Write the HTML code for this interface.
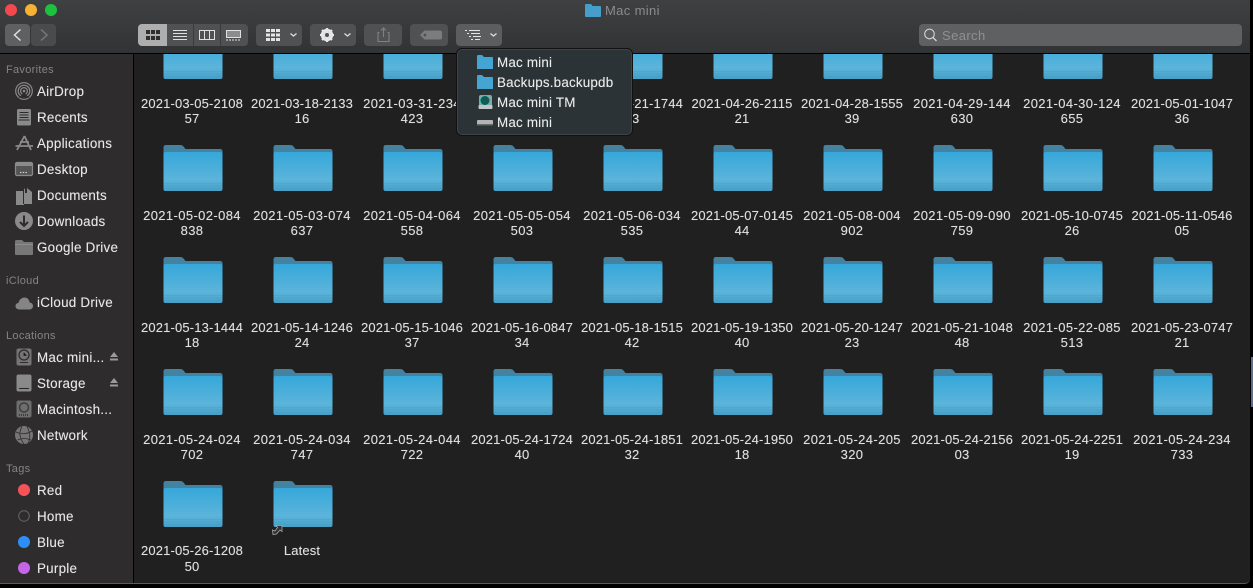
<!DOCTYPE html>
<html><head><meta charset="utf-8"><title>Mac mini</title>
<style>
html,body{margin:0;padding:0;background:#000;width:1253px;height:588px;overflow:hidden}
body{position:relative;font-family:"Liberation Sans",sans-serif}
#win{position:absolute;left:0;top:0;width:1250px;height:584px;background:#212021;overflow:hidden;border-radius:0 0 5px 0;border-bottom:1px solid #5a5a5a;box-sizing:border-box}
.i{position:absolute;width:110px;text-align:center;font-size:13px;line-height:15px;color:#e0e0e0;letter-spacing:.15px;white-space:nowrap;text-shadow:0 0 .6px rgba(255,255,255,.45)}
.w{letter-spacing:.38px}
.f{position:absolute;width:60px;height:48px}
#bar{position:absolute;left:0;top:0;width:1250px;height:54px;background:linear-gradient(#3f4042,#323335);border-bottom:1px solid #000;box-sizing:border-box}
#side{position:absolute;left:0;top:54px;width:134px;height:530px;background:#2e2c2d;border-right:1px solid #000;box-sizing:border-box}
.s{position:absolute;left:37px;font-size:13.4px;line-height:16px;color:#e8e8e8;letter-spacing:.25px;white-space:nowrap;text-shadow:0 0 .6px rgba(255,255,255,.45)}
.h{position:absolute;left:6px;font-size:11px;line-height:14px;color:#858485;letter-spacing:.3px}
.b{position:absolute;top:24px;height:22px;background:#5a5b5d;border-radius:4px}
#pop{position:absolute;left:456px;top:48px;width:177px;height:88px;background:#2b3337;border-radius:6px;border:1px solid #111;box-shadow:inset 0 0 0 1px #3e4448;box-sizing:border-box}
.p{position:absolute;left:497px;font-size:13.4px;line-height:16px;color:#ececec;letter-spacing:.2px;white-space:nowrap;text-shadow:0 0 .6px rgba(255,255,255,.45)}
#strip{position:absolute;left:1251px;top:357px;width:2px;height:50px;background:#5d6f8e}
svg.o{position:absolute;left:0;top:0;pointer-events:none}
</style></head><body>
<svg width="0" height="0" style="position:absolute"><defs>
<linearGradient id="g" x1="0" y1="0" x2="0" y2="1"><stop offset="0" stop-color="#35a7da"/><stop offset=".72" stop-color="#5cb4da"/><stop offset=".8" stop-color="#55aed4"/><stop offset="1" stop-color="#479fc6"/></linearGradient>
<symbol id="fd" viewBox="0 0 60 48"><path d="M.5 8V3.500Q.5 1 3 1H17Q19.500 1 20.500 2.500L22.500 5H57Q59.500 5 59.500 7.500V12H.5Z" fill="#44829f"/><rect x=".5" y="8" width="59" height="39" rx="2" fill="url(#g)"/><path d="M.5 39.500H59.500M.5 42H59.500M.5 44.500H59.500" stroke="#439bc2" stroke-width=".6" opacity=".6"/></symbol>
</defs></svg>
<div id="win">
<svg class="f" style="left:163px;top:32px"><use href="#fd"/></svg><svg class="f" style="left:273px;top:32px"><use href="#fd"/></svg><svg class="f" style="left:383px;top:32px"><use href="#fd"/></svg><svg class="f" style="left:493px;top:32px"><use href="#fd"/></svg><svg class="f" style="left:603px;top:32px"><use href="#fd"/></svg><svg class="f" style="left:713px;top:32px"><use href="#fd"/></svg><svg class="f" style="left:823px;top:32px"><use href="#fd"/></svg><svg class="f" style="left:933px;top:32px"><use href="#fd"/></svg><svg class="f" style="left:1043px;top:32px"><use href="#fd"/></svg><svg class="f" style="left:1153px;top:32px"><use href="#fd"/></svg>
<svg class="f" style="left:163px;top:144px"><use href="#fd"/></svg><svg class="f" style="left:273px;top:144px"><use href="#fd"/></svg><svg class="f" style="left:383px;top:144px"><use href="#fd"/></svg><svg class="f" style="left:493px;top:144px"><use href="#fd"/></svg><svg class="f" style="left:603px;top:144px"><use href="#fd"/></svg><svg class="f" style="left:713px;top:144px"><use href="#fd"/></svg><svg class="f" style="left:823px;top:144px"><use href="#fd"/></svg><svg class="f" style="left:933px;top:144px"><use href="#fd"/></svg><svg class="f" style="left:1043px;top:144px"><use href="#fd"/></svg><svg class="f" style="left:1153px;top:144px"><use href="#fd"/></svg>
<svg class="f" style="left:163px;top:256px"><use href="#fd"/></svg><svg class="f" style="left:273px;top:256px"><use href="#fd"/></svg><svg class="f" style="left:383px;top:256px"><use href="#fd"/></svg><svg class="f" style="left:493px;top:256px"><use href="#fd"/></svg><svg class="f" style="left:603px;top:256px"><use href="#fd"/></svg><svg class="f" style="left:713px;top:256px"><use href="#fd"/></svg><svg class="f" style="left:823px;top:256px"><use href="#fd"/></svg><svg class="f" style="left:933px;top:256px"><use href="#fd"/></svg><svg class="f" style="left:1043px;top:256px"><use href="#fd"/></svg><svg class="f" style="left:1153px;top:256px"><use href="#fd"/></svg>
<svg class="f" style="left:163px;top:368px"><use href="#fd"/></svg><svg class="f" style="left:273px;top:368px"><use href="#fd"/></svg><svg class="f" style="left:383px;top:368px"><use href="#fd"/></svg><svg class="f" style="left:493px;top:368px"><use href="#fd"/></svg><svg class="f" style="left:603px;top:368px"><use href="#fd"/></svg><svg class="f" style="left:713px;top:368px"><use href="#fd"/></svg><svg class="f" style="left:823px;top:368px"><use href="#fd"/></svg><svg class="f" style="left:933px;top:368px"><use href="#fd"/></svg><svg class="f" style="left:1043px;top:368px"><use href="#fd"/></svg><svg class="f" style="left:1153px;top:368px"><use href="#fd"/></svg>
<svg class="f" style="left:163px;top:480px"><use href="#fd"/></svg><svg class="f" style="left:273px;top:480px"><use href="#fd"/></svg>

<div class="i" style="left:137px;top:96px">2021-03-05-2108<br>57</div><div class="i" style="left:247px;top:96px">2021-03-18-2133<br>16</div><div class="i w" style="left:357px;top:96px">2021-03-31-234<br>423</div><div class="i" style="left:467px;top:96px">2021-04-21-1744<br>13</div><div class="i" style="left:577px;top:96px">2021-04-21-1744<br>13</div><div class="i" style="left:687px;top:96px">2021-04-26-2115<br>21</div><div class="i" style="left:797px;top:96px">2021-04-28-1555<br>39</div><div class="i w" style="left:907px;top:96px">2021-04-29-144<br>630</div><div class="i w" style="left:1017px;top:96px">2021-04-30-124<br>655</div><div class="i" style="left:1127px;top:96px">2021-05-01-1047<br>36</div>

<div class="i w" style="left:137px;top:208px">2021-05-02-084<br>838</div><div class="i w" style="left:247px;top:208px">2021-05-03-074<br>637</div><div class="i w" style="left:357px;top:208px">2021-05-04-064<br>558</div><div class="i w" style="left:467px;top:208px">2021-05-05-054<br>503</div><div class="i w" style="left:577px;top:208px">2021-05-06-034<br>535</div><div class="i" style="left:687px;top:208px">2021-05-07-0145<br>44</div><div class="i w" style="left:797px;top:208px">2021-05-08-004<br>902</div><div class="i w" style="left:907px;top:208px">2021-05-09-090<br>759</div><div class="i" style="left:1017px;top:208px">2021-05-10-0745<br>26</div><div class="i" style="left:1127px;top:208px">2021-05-11-0546<br>05</div>

<div class="i" style="left:137px;top:320px">2021-05-13-1444<br>18</div><div class="i" style="left:247px;top:320px">2021-05-14-1246<br>24</div><div class="i" style="left:357px;top:320px">2021-05-15-1046<br>37</div><div class="i" style="left:467px;top:320px">2021-05-16-0847<br>34</div><div class="i" style="left:577px;top:320px">2021-05-18-1515<br>42</div><div class="i" style="left:687px;top:320px">2021-05-19-1350<br>40</div><div class="i" style="left:797px;top:320px">2021-05-20-1247<br>23</div><div class="i" style="left:907px;top:320px">2021-05-21-1048<br>48</div><div class="i w" style="left:1017px;top:320px">2021-05-22-085<br>513</div><div class="i" style="left:1127px;top:320px">2021-05-23-0747<br>21</div>

<div class="i w" style="left:137px;top:432px">2021-05-24-024<br>702</div><div class="i w" style="left:247px;top:432px">2021-05-24-034<br>747</div><div class="i w" style="left:357px;top:432px">2021-05-24-044<br>722</div><div class="i" style="left:467px;top:432px">2021-05-24-1724<br>40</div><div class="i" style="left:577px;top:432px">2021-05-24-1851<br>32</div><div class="i" style="left:687px;top:432px">2021-05-24-1950<br>18</div><div class="i w" style="left:797px;top:432px">2021-05-24-205<br>320</div><div class="i" style="left:907px;top:432px">2021-05-24-2156<br>03</div><div class="i" style="left:1017px;top:432px">2021-05-24-2251<br>19</div><div class="i w" style="left:1127px;top:432px">2021-05-24-234<br>733</div>

<div class="i" style="left:137px;top:543px;line-height:16px">2021-05-26-1208<br>50</div><div class="i" style="left:247px;top:543px;line-height:16px">Latest</div>

<svg class="o" style="left:270px;top:522px" width="14" height="14" viewBox="0 0 14 14"><path d="M3 12.500L2.500 8 5 9 7.500 5.500 6 3.500H12V9.500L10 8 6.500 12Z" fill="#333" stroke="#aaa" stroke-width=".8"/></svg>

<div id="bar"></div>
<div class="b" style="left:5px;width:25px;background:#5f6062"></div>
<div class="b" style="left:31px;width:25px;background:#4a4b4d"></div>
<div class="b" style="left:138px;width:110px;background:#505153"></div>
<div class="b" style="left:138px;width:29px;background:#aeaeae;border-radius:4px 0 0 4px"></div>
<div class="b" style="left:256px;width:46px;background:#505153"></div>
<div class="b" style="left:310px;width:46px;background:#505153"></div>
<div class="b" style="left:364px;width:38px;background:#505153"></div>
<div class="b" style="left:410px;width:38px;background:#505153"></div>
<div class="b" style="left:456px;width:46px;background:#5c5d5f"></div>
<div class="b" style="left:919px;width:323px;background:#5e6062"></div>
<div style="position:absolute;left:942px;top:28px;font-size:13px;line-height:16px;color:#8f9092;letter-spacing:.4px">Search</div>
<div style="position:absolute;left:605px;top:3px;font-size:13px;line-height:16px;color:#8c8c8e;letter-spacing:.35px">Mac mini</div>

<div id="side">
<div class="h" style="top:9px">Favorites</div>
<div class="s" style="top:30px">AirDrop</div><div class="s" style="top:56px">Recents</div><div class="s" style="top:82px">Applications</div><div class="s" style="top:108px">Desktop</div><div class="s" style="top:134px">Documents</div><div class="s" style="top:160px">Downloads</div><div class="s" style="top:186px">Google Drive</div>
<div class="h" style="top:220px">iCloud</div>
<div class="s" style="top:241px">iCloud Drive</div>
<div class="h" style="top:275px">Locations</div>
<div class="s" style="top:296px">Mac mini...</div><div class="s" style="top:322px">Storage</div><div class="s" style="top:348px">Macintosh...</div><div class="s" style="top:374px">Network</div>
<div class="h" style="top:408px">Tags</div>
<div class="s" style="top:429px">Red</div><div class="s" style="top:455px">Home</div><div class="s" style="top:481px">Blue</div><div class="s" style="top:507px">Purple</div>
</div>

<svg class="o" width="1250" height="584" viewBox="0 0 1250 584">
<circle cx="11" cy="10" r="6" fill="#f2484e"/><circle cx="31" cy="10" r="6" fill="#f7b135"/><circle cx="51" cy="10" r="6" fill="#1cc23f"/>
<path d="M20.500 29.500L14.500 35 20.500 40.500" fill="none" stroke="#e0e0e0" stroke-width="1.500"/>
<path d="M41 29.500L47 35 41 40.500" fill="none" stroke="#77787a" stroke-width="1.500"/>
<g fill="#2f2f30"><rect x="146" y="30" width="4" height="4"/><rect x="151" y="30" width="4" height="4"/><rect x="156" y="30" width="4" height="4"/><rect x="146" y="36" width="4" height="4"/><rect x="151" y="36" width="4" height="4"/><rect x="156" y="36" width="4" height="4"/></g>
<path d="M173 30.500H187M173 33.500H187M173 36.500H187M173 39.500H187" stroke="#e0e0e0"/>
<path d="M193.500 24V46M220.500 24V46" stroke="#3a3b3d"/>
<path d="M199.500 30.500H214.500V39.500H199.500ZM204.500 30.500V39.500M209.500 30.500V39.500" fill="none" stroke="#e0e0e0"/>
<path d="M226.500 30.500H240.500V37.500H226.500Z" fill="#8b8c8e" stroke="#e0e0e0"/><path d="M226 40H241" stroke="#e0e0e0" stroke-dasharray="2 1"/>
<g fill="#e4e4e4"><rect x="266" y="29" width="4" height="3"/><rect x="271" y="29" width="4" height="3"/><rect x="276" y="29" width="4" height="3"/><rect x="266" y="33.500" width="4" height="3"/><rect x="271" y="33.500" width="4" height="3"/><rect x="276" y="33.500" width="4" height="3"/><rect x="266" y="38" width="4" height="3"/><rect x="271" y="38" width="4" height="3"/><rect x="276" y="38" width="4" height="3"/></g>
<g fill="none" stroke="#dcdcdc" stroke-width="1.300"><path d="M290.500 33.500L293.500 36 296.500 33.500"/><path d="M344.500 33.500L347.500 36 350.500 33.500"/><path d="M490.500 33.500L493.500 36 496.500 33.500"/></g>
<circle cx="327" cy="35" r="4.800" fill="none" stroke="#e6e6e6" stroke-width="2.800"/>
<path d="M327 28V42M320 35H334M322 30L332 40M332 30L322 40" stroke="#e6e6e6" stroke-width="2.200"/>
<circle cx="327" cy="35" r="2" fill="#505153"/>
<path d="M379.500 32.500H378V41.500H389V32.500H387.500M383.500 37V28M381 30.500L383.500 28 386 30.500" fill="none" stroke="#808184" stroke-width="1.100"/>
<path fill-rule="evenodd" d="M420 35L424.500 30.500H440Q442 30.500 442 32.500V37.500Q442 39.500 440 39.500H424.500ZM425 33.500a1.500 1.500 0 1 0 .01 0Z" fill="#7b7c7e"/>
<path d="M469 30.500H480M471 33.500H480M473 36.500H481M475 39.500H480" stroke="#e4e4e4"/><path d="M465 30.500H467M467 33.500H469M469 36.500H471M471 39.500H473" stroke="#e4e4e4"/>
<circle cx="929.500" cy="34" r="4.800" fill="none" stroke="#d2d2d2" stroke-width="1.100"/><path d="M933 37.500L936.500 41" stroke="#d2d2d2" stroke-width="1.300"/>
<path d="M585 5Q585 4 586 4H591L592.500 6H600Q601 6 601 7V16Q601 17 600 17H586Q585 17 585 16Z" fill="#459fca"/>
<g fill="none" stroke="#8a8a8a" stroke-width="1.200"><circle cx="24" cy="91" r="8.300"/><circle cx="24" cy="91" r="5.800"/><circle cx="24" cy="91" r="3.400"/></g><circle cx="24" cy="91" r="1.300" fill="#8a8a8a"/><path d="M19 98L24 92 29 98Z" fill="#2e2c2d"/>
<path d="M17 110.500Q17 109 18.500 109H29.500Q31 109 31 110.500V124Q31 125.500 29.500 125.500H18.500Q17 125.500 17 124Z" fill="#8a8a8a"/><path d="M19.500 112.500H28.500M19.500 115H28.500M19.500 117.500H28.500" stroke="#2e2c2d"/><path d="M18.500 120H29.500" stroke="#2e2c2d"/>
<path d="M24.500 136L17 150M24.500 136L31 150M15.500 146H33M20 142H29" stroke="#8a8a8a" stroke-width="1.800" fill="none"/>
<rect x="15.500" y="162.500" width="17" height="13" rx="1.500" fill="#555455" stroke="#8a8a8a" stroke-width="1.200"/><path d="M15.500 163H32.500V166H15.500Z" fill="#8a8a8a"/><path d="M20 172.500H28" stroke="#ccc" stroke-dasharray="1.500 1.200" stroke-width="1.300"/>
<path d="M16 191H23V188L25 189V193H27V188L32 192V204H24V205H16Z" fill="#8a8a8a"/><path d="M23.500 188V204" stroke="#2e2c2d"/>
<circle cx="24" cy="221" r="9" fill="#8a8a8a"/><path d="M24 215.500V225M20 222L24 226 28 222" fill="none" stroke="#2e2c2d" stroke-width="2"/>
<path d="M15 241.500Q15 240 16.500 240H22L24 242H32.500Q33 242 33 243V254Q33 255 32 255H16Q15 255 15 254Z" fill="#787778"/><path d="M15 244.500H33" stroke="#8c8c8c"/>
<path d="M19.500 309.500C16.500 309.500 15.500 307.500 15.500 306C15.500 304 17 303 18.500 303C19 300 21.500 297.500 24.500 297.500C27.500 297.500 29.500 300 29.500 302.500C31.500 302.500 33 304 33 306C33 308 31.500 309.500 29.500 309.500Z" fill="#868586"/>
<rect x="16.500" y="348.500" width="15" height="17" rx="2" fill="#767576"/><circle cx="24" cy="355" r="5" fill="none" stroke="#2e2c2d" stroke-width="1.300"/><path d="M24 352.500V355.500H26.500M20 362.500H28" stroke="#2e2c2d"/>
<rect x="16.500" y="374.500" width="15" height="17" rx="2" fill="#8b8a8b"/><path d="M19 388.500H29" stroke="#2e2c2d" stroke-width="1.100"/>
<rect x="16.500" y="400.500" width="15" height="17" rx="2" fill="#6f6e6f"/><circle cx="24" cy="407.500" r="4.500" fill="none" stroke="#3f3e3f" stroke-width="1.500"/><path d="M19 415H29" stroke="#2e2c2d" stroke-dasharray="1 1" stroke-width="1.500"/>
<circle cx="24" cy="435" r="9" fill="#777677"/><path d="M16 432Q24 436 32 431M22 426.500Q17 435 24 444M27 426.500Q32 436 28 443.500M17.500 440Q24 437 31 440" fill="none" stroke="#2e2c2d" stroke-width=".8"/>
<path d="M114 352L118 357H110Z" fill="#9a9a9a"/><rect x="110" y="358.500" width="8" height="2" fill="#9a9a9a"/>
<path d="M114 378L118 383H110Z" fill="#9a9a9a"/><rect x="110" y="384.500" width="8" height="2" fill="#9a9a9a"/>
<circle cx="24" cy="490" r="6" fill="#f5535a"/><circle cx="24" cy="516" r="5.300" fill="none" stroke="#606060" stroke-width="1.100"/><circle cx="24" cy="542" r="6" fill="#2d8ff5"/><circle cx="24" cy="568" r="6" fill="#c565e8"/>
</svg>

<div id="pop"></div>
<div class="p" style="top:55px">Mac mini</div><div class="p" style="top:75px">Backups.backupdb</div><div class="p" style="top:95px">Mac mini TM</div><div class="p" style="top:115px">Mac mini</div>
<svg class="o" width="1250" height="200" viewBox="0 0 1250 200">
<path d="M477 57Q477 55 478 55H482L484 57H492Q493 57 493 58V69H477Z" fill="#45a5d2"/>
<path d="M477 77Q477 75 478 75H482L484 77H492Q493 77 493 78V89H477Z" fill="#45a5d2"/>
<rect x="479" y="95" width="13" height="14" rx="2" fill="#8fa3a3"/><circle cx="485" cy="100.500" r="5" fill="#155a52" stroke="#4fc2b3"/><rect x="478.500" y="105" width="14" height="4" rx="1" fill="#c2c6c6"/>
<rect x="477" y="120" width="16" height="5" rx="1" fill="#b4b4b4"/><rect x="477" y="124" width="16" height="1.500" fill="#6a6a6a"/>
</svg>
</div>
<div id="strip"></div>
</body></html>
